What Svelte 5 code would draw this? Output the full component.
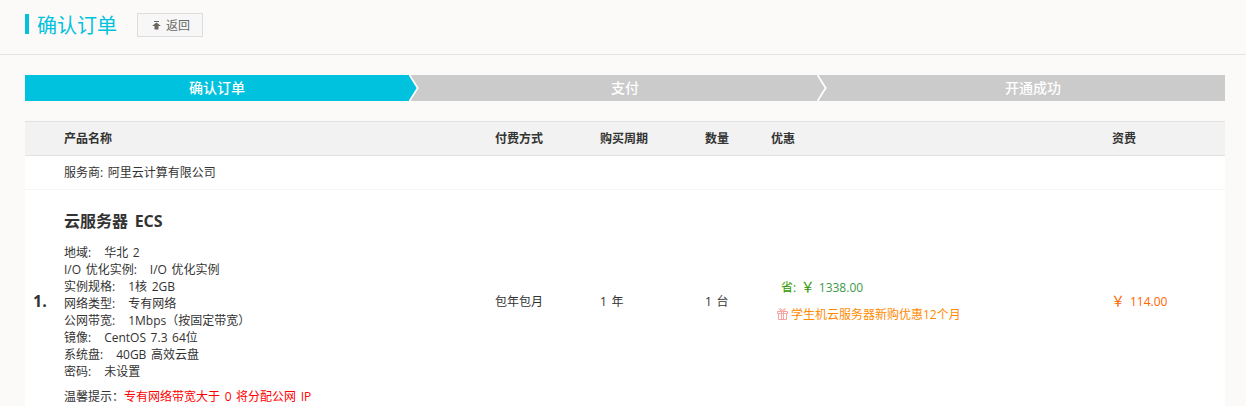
<script>
  const steps = [
    { label: "确认订单", active: true },
    { label: "支付" },
    { label: "开通成功" }
  ];
  const columns = ["", "产品名称", "付费方式", "购买周期", "数量", "优惠", "资费"];
  const specs = [
    ["地域:", "华北 2"],
    ["I/O 优化实例:", "I/O 优化实例"],
    ["实例规格:", "1核 2GB"],
    ["网络类型:", "专有网络"],
    ["公网带宽:", "1Mbps（按固定带宽）"],
    ["镜像:", "CentOS 7.3 64位"],
    ["系统盘:", "40GB 高效云盘"],
    ["密码:", "未设置"]
  ];
</script>

<div class="page">
  <header class="top">
    <h1>确认订单</h1>
    <button class="back">
      <svg width="9" height="9" viewBox="0 0 9 9"><path d="M2 0H7V1H2ZM4.500 1.500 9 5H6.500V8.500H2.500V5H0Z" fill="#6b6660" /></svg>
      返回
    </button>
  </header>

  <div class="content">
    <div class="steps">
      {#each steps as step, i}
        <div class="step s{i}" class:active={step.active}>
          {step.label}
          {#if i < 2}
            <svg class="chev" width="10" height="26" viewBox="0 0 10 26">
              {#if step.active}<path d="M0 0 8.500 13 0 26Z" fill="#00c1de" />{/if}
              <path d="M0.500 0 8.700 13 0.500 26" fill="none" stroke="#fff" stroke-width="1.700" />
            </svg>
          {/if}
        </div>
      {/each}
    </div>

    <div class="order">
      <div class="row head">
        {#each columns as col}
          <div>{col}</div>
        {/each}
      </div>
      <div class="provider">服务商: 阿里云计算有限公司</div>
      <div class="row item">
        <div class="num">1.</div>
        <div class="product">
          <h2>云服务器 ECS</h2>
          <ul>
            {#each specs as [k, v]}
              <li><span class="key">{k}</span>{v}</li>
            {/each}
          </ul>
          <p class="tip">温馨提示：<span>专有网络带宽大于 0 将分配公网 IP</span></p>
        </div>
        <div>包年包月</div>
        <div>1 年</div>
        <div>1 台</div>
        <div class="discount">
          <div class="save"><span class="label">省: <span class="yen">￥</span></span>1338.00</div>
          <div class="promo">
            <svg width="11" height="12" viewBox="0 0 11 12" fill="none" stroke="#f7a3a3">
              <path d="M.5 3.500h10v2h-10zM1.500 5.500v6h8v-6M4.500 3.500v8M6.500 3.500v8M5.500 3.500C3.500 3.500 2 1 3 .6 4.200.2 5.500 3.500 5.500 3.500 5.500 3.500 6.800.2 8 .6 9 1 7.500 3.500 5.500 3.500Z" />
            </svg>
            学生机云服务器新购优惠12个月
          </div>
        </div>
        <div class="fee"><span class="yen">￥</span>114.00</div>
      </div>
    </div>
  </div>
</div>

<style>
  :global(body) {
    margin: 0;
    background: #fbfaf8;
  }
  .page {
    height: 406px;
    overflow: hidden;
    font-family: "Open Sans", "Noto Sans CJK SC", sans-serif;
    font-size: 12px;
    color: #333;
    word-spacing: 1.5px;
  }
  .top {
    height: 54px;
    border-bottom: 1px solid #e5e5e5;
    padding-left: 25px;
    display: flex;
    align-items: flex-start;
  }
  h1 {
    margin: 14px 0 0;
    height: 20px;
    line-height: 23px;
    border-left: 4px solid #00c1de;
    padding-left: 8px;
    font-size: 20px;
    font-weight: 400;
    color: #00c1de;
  }
  .back {
    margin: 13px 0 0 20px;
    width: 66px;
    height: 24px;
    padding: 0 0 0 2px;
    border: 1px solid #ddd;
    background: #f7f7f7;
    color: #666;
    font: inherit;
    display: flex;
    align-items: center;
    justify-content: center;
    gap: 5px;
  }
  .content {
    padding: 20px 21px 0 25px;
  }
  .steps {
    display: flex;
    height: 26px;
    background: #cbcbcb;
    color: #fff;
    font-size: 14px;
    font-weight: 500;
    line-height: 26px;
    text-align: center;
  }
  .step {
    position: relative;
    box-sizing: border-box;
  }
  .s0 {
    width: 384px;
    background: #00c1de;
  }
  .s1 {
    width: 408px;
    padding-left: 24px;
  }
  .s2 {
    width: 408px;
    padding-left: 24px;
  }
  .chev {
    position: absolute;
    left: 100%;
    top: 0;
  }
  .order {
    margin-top: 20px;
    background: #fff;
    border-top: 1px solid #e1e1e1;
  }
  .row {
    display: grid;
    grid-template-columns: 39px 431px 105px 105px 66px 341px 113px;
    align-items: center;
  }
  .head {
    height: 32px;
    padding-bottom: 1px;
    background: #f2f2f2;
    border-bottom: 1px solid #e1e1e1;
    font-weight: 700;
  }
  .provider {
    height: 33px;
    line-height: 33px;
    padding-left: 39px;
    border-bottom: 1px solid #f5f5f5;
  }
  .product {
    padding: 20px 0 7px;
  }
  .num {
    padding-left: 8px;
    font-size: 16px;
    font-weight: 700;
  }
  h2 {
    margin: 0 0 12px;
    font-size: 16px;
    line-height: 22px;
    font-weight: 700;
    word-spacing: 2.500px;
  }
  ul {
    margin: 0;
    padding: 0;
    list-style: none;
    line-height: 17px;
  }
  .key {
    margin-right: 13px;
  }
  .tip {
    margin: 8px 0 0;
    line-height: 17px;
  }
  .tip span {
    color: #f00;
  }
  .yen {
    font-size: 14px;
    line-height: 17px;
  }
  .discount {
    margin-bottom: 2px;
  }
  .save {
    padding-left: 10px;
    color: #3d9a4a;
    line-height: 17px;
  }
  .save .label {
    color: #390;
    margin-right: 4px;
  }
  .promo {
    margin-top: 9px;
    padding-left: 6px;
    color: #ff8a00;
    display: flex;
    align-items: center;
    gap: 3px;
  }
  .fee {
    color: #f60;
  }
  .fee .yen {
    margin: 0 5px 0 -1px;
  }
</style>
